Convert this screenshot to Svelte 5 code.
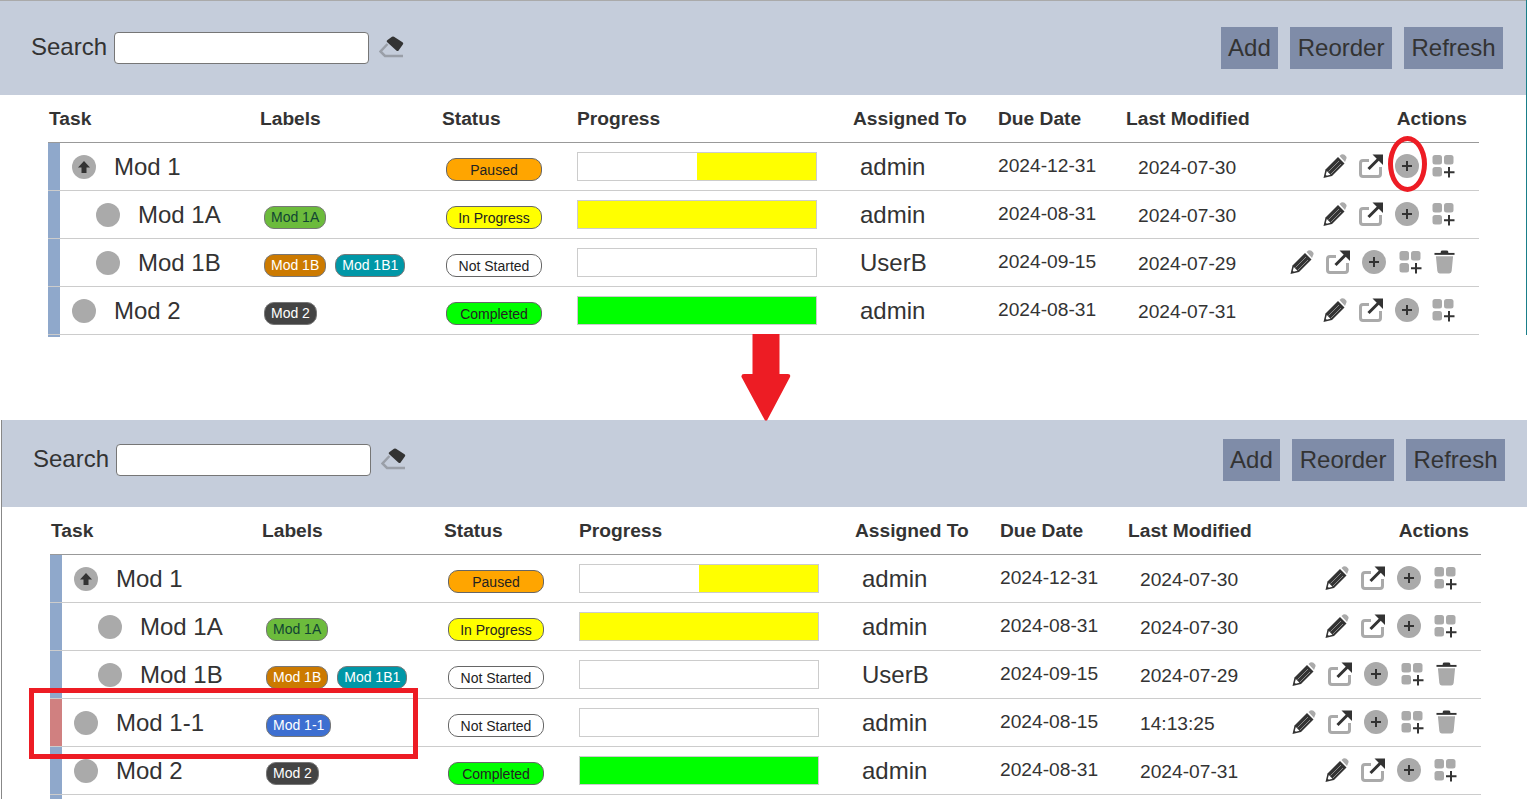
<script>
  const columns = ['Task', 'Labels', 'Status', 'Progress', 'Assigned To', 'Due Date', 'Last Modified', 'Actions'];

  const mod1 = { name: 'Mod 1', level: 0, expanded: true, labels: [], status: 'Paused', fill: 50, side: 'right', color: 'yellow', user: 'admin', due: '2024-12-31', modified: '2024-07-30' };
  const mod1a = { name: 'Mod 1A', level: 1, labels: [{ text: 'Mod 1A', kind: 'green' }], status: 'In Progress', fill: 100, color: 'yellow', user: 'admin', due: '2024-08-31', modified: '2024-07-30' };
  const mod1b = { name: 'Mod 1B', level: 1, labels: [{ text: 'Mod 1B', kind: 'amber' }, { text: 'Mod 1B1', kind: 'teal' }], status: 'Not Started', fill: 0, user: 'UserB', due: '2024-09-15', modified: '2024-07-29', canDelete: true };
  const mod11 = { name: 'Mod 1-1', level: 0, isNew: true, labels: [{ text: 'Mod 1-1', kind: 'blue' }], status: 'Not Started', fill: 0, user: 'admin', due: '2024-08-15', modified: '14:13:25', canDelete: true };
  const mod2 = { name: 'Mod 2', level: 0, labels: [{ text: 'Mod 2', kind: 'dark' }], status: 'Completed', fill: 100, color: 'lime', user: 'admin', due: '2024-08-31', modified: '2024-07-31' };

  const before = [mod1, mod1a, mod1b, mod2];
  const after = [mod1, mod1a, mod1b, mod11, mod2];

  const statusClass = {
    'Paused': 'paused',
    'In Progress': 'progress',
    'Not Started': 'idle',
    'Completed': 'done'
  };
</script>

{#snippet panel(rows, kind)}
  <section class="panel {kind}">
    <div class="toolbar">
      <label class="search">
        <span>Search</span>
        <input type="text" />
      </label>
      <svg class="eraser" width="25" height="22" viewBox="8 10 25 22" aria-hidden="true">
        <path d="M16.5 18 L9.5 25.5 L14 30 H32" fill="none" stroke="#9a9fa8" stroke-width="2.5" />
        <path d="M16 16 Q15 15 16.5 14 L21 10.8 Q22 10.2 23 10.8 L31.5 16.3 Q32.8 17.2 32 18.3 L27.6 24.5 Q26.8 25.5 25.6 24.8 Z" fill="#333" />
      </svg>
      <div class="buttons">
        <button>Add</button>
        <button>Reorder</button>
        <button>Refresh</button>
      </div>
    </div>

    <div class="table">
      <div class="row head">
        {#each columns as col}
          <div class="th">{col}</div>
        {/each}
      </div>

      {#each rows as row}
        <div class="row">
          <div class="task">
            <span class="bar" class:new={row.isNew}></span>
            <span class="dot" class:indent={row.level === 1}>
              {#if row.expanded}
                <svg width="24" height="24" viewBox="0 0 24 24" aria-hidden="true">
                  <path d="M12 6 L18 12.5 H14.5 V18 H9.5 V12.5 H6 Z" fill="#333" />
                </svg>
              {/if}
            </span>
            <span class="name">{row.name}</span>
          </div>
          <div class="labels">
            {#each row.labels as label}
              <span class="label {label.kind}">{label.text}</span>
            {/each}
          </div>
          <div class="status-cell">
            <span class="status {statusClass[row.status]}">{row.status}</span>
          </div>
          <div class="progress-cell">
            <div class="track" class:right={row.side === 'right'}>
              {#if row.fill > 0}
                <div class="fill {row.color}" style="width: {row.fill}%"></div>
              {/if}
            </div>
          </div>
          <div class="user">{row.user}</div>
          <div class="due">{row.due}</div>
          <div class="modified">{row.modified}</div>
          <div class="actions">
            <svg width="24" height="24" viewBox="0 0 24 24" aria-hidden="true">
              <path d="M0.5 24 L2.5 15.5 L15 3 L21.5 9.5 L9 22 Z" fill="#333" />
              <path d="M2.5 22 L3.8 17 L7.5 20.7 Z" fill="#fff" />
              <path d="M1.5 23 L2.4 20.5 L4 22 Z" fill="#333" />
              <path d="M5.5 17.5 L16 7 M8 20 L18 10" stroke="#8a8a8a" stroke-width="1" />
              <path d="M16.5 2 L18.2 0.6 Q20 -0.4 21.5 0.8 L23 2.3 Q24.2 3.8 23 5.5 L22 8 Z" fill="#aaa" />
            </svg>
            <svg width="24" height="24" viewBox="0 0 24 24" aria-hidden="true">
              <path d="M10 6.5 H4 Q1.5 6.5 1.5 9 V20 Q1.5 22.5 4 22.5 H19 Q21.5 22.5 21.5 20 V13" fill="none" stroke="#aaa" stroke-width="3" />
              <path d="M9.5 15 L20 4.5" stroke="#333" stroke-width="3" />
              <path d="M13.5 0.5 H24 V11 Z" fill="#333" />
            </svg>
            <svg width="24" height="24" viewBox="0 0 24 24" aria-hidden="true">
              <circle cx="12" cy="12" r="12" fill="#aaa" />
              <path d="M12 7 V17 M7 12 H17" stroke="#333" stroke-width="2" />
            </svg>
            <svg width="24" height="24" viewBox="0 0 24 24" aria-hidden="true">
              <rect x="1.5" y="1" width="9.5" height="9.5" rx="2.5" fill="#aaa" />
              <rect x="13" y="1" width="9.5" height="9.5" rx="2.5" fill="#aaa" />
              <rect x="1.5" y="13" width="9.5" height="9.5" rx="2.5" fill="#aaa" />
              <path d="M18 13 V23.5 M13 18.3 H23.5" stroke="#333" stroke-width="2" />
            </svg>
            {#if row.canDelete}
              <svg width="21" height="24" viewBox="0 0 22 24" aria-hidden="true">
                <path d="M7 1.5 Q7 0 9 0 H13 Q15 0 15 1.5 V2.5 H7 Z" fill="#333" />
                <path d="M0.5 3.5 H21.5" stroke="#333" stroke-width="2" />
                <path d="M2 6 H20 L18.5 21.5 Q18.3 24 16 24 H6 Q3.7 24 3.5 21.5 Z" fill="#aaa" />
              </svg>
            {/if}
          </div>
        </div>
      {/each}
      <span class="tail"></span>
    </div>
  </section>
{/snippet}

<div class="page">
  {@render panel(before, 'first')}
  {@render panel(after, 'second')}

  <svg class="arrow" width="50" height="87" viewBox="0 0 50 87" aria-hidden="true">
    <path d="M11.5 0 H38.5 V40 H47 Q50 40 49 43 L26 86.5 H24 L0.5 43 Q0 40 3 40 H11.5 Z" fill="#ed1c24" />
  </svg>
  <span class="ring"></span>
  <span class="highlight"></span>
</div>

<style>
  :global(body) {
    background: #fff;
  }

  .page {
    position: relative;
    width: 1527px;
    height: 799px;
    overflow: hidden;
    font-family: 'Liberation Sans', Arial, sans-serif;
    color: #333;
  }

  .panel {
    box-sizing: content-box;
    width: 1526px;
  }

  /* the teal edge only shows on the top window */
  .first {
    height: 335px;
    border-right: 1px solid #1a7f8a;
  }

  .first .toolbar {
    box-shadow: inset 0 1px 0 #aaa;
    height: 95px;
    padding-top: 1px;
  }

  .first .tail {
    height: 2px;
  }

  .second {
    margin-top: 85px;
    margin-left: 1px;
    border-left: 1px solid #888;
    height: 379px;
    overflow: hidden;
  }

  .second .toolbar {
    height: 87px;
    padding-bottom: 7px;
  }

  .toolbar {
    box-sizing: border-box;
    display: flex;
    align-items: center;
    background: #c5cddb;
    padding-left: 31px;
    padding-right: 23px;
  }

  .search {
    display: flex;
    align-items: center;
    gap: 7px;
    font-size: 24px;
  }

  .search span {
    margin-top: -2px;
  }

  .search input {
    box-sizing: border-box;
    width: 255px;
    height: 32px;
    border: 1px solid #767676;
    border-radius: 4px;
    background: #fff;
    padding: 0 4px;
    font-size: 16px;
  }

  .eraser {
    margin-left: 10px;
    margin-top: -3px;
  }

  .buttons {
    display: flex;
    gap: 12px;
    margin-left: auto;
  }

  .buttons button {
    height: 42px;
    padding: 0 7.5px;
    border: none;
    background: #7f8ca8;
    color: #333;
    font-family: inherit;
    font-size: 24px;
  }

  .table {
    margin-left: 48px;
    width: 1431px;
  }

  .row {
    box-sizing: border-box;
    display: grid;
    grid-template-columns: 212px 182px 135px 276px 145px 128px 164px 189px;
    align-items: center;
    height: 48px;
    border-bottom: 1px solid #ccc;
  }

  .row.head {
    border-bottom-color: #999;
    font-size: 19.2px;
    font-weight: bold;
  }

  .th:first-child {
    padding-left: 1px;
  }

  .th:last-child {
    text-align: right;
    padding-right: 12px;
  }

  .task {
    display: flex;
    align-items: center;
    align-self: stretch;
    font-size: 24px;
  }

  .bar {
    align-self: stretch;
    width: 12px;
    background: #8fa8cb;
  }

  .bar.new {
    background: #d08080;
  }

  .tail {
    display: block;
    width: 12px;
    height: 5px;
    background: #8fa8cb;
  }

  .dot {
    flex: none;
    width: 24px;
    height: 24px;
    margin-left: 12px;
    border-radius: 50%;
    background: #aaa;
  }

  .dot.indent {
    margin-left: 36px;
  }

  .dot svg {
    display: block;
  }

  .name {
    margin-left: 18px;
  }

  .labels {
    display: flex;
    gap: 9px;
    padding-left: 4px;
    padding-top: 6px;
  }

  .label {
    box-sizing: border-box;
    height: 23px;
    padding: 0 6px;
    border: 1px solid #777;
    border-radius: 10px;
    font-size: 14px;
    line-height: 21px;
    color: #fff;
  }

  .label.green {
    background: #6cbb3c;
    color: #143;
  }

  .label.amber {
    background: #cc7a00;
  }

  .label.teal {
    background: #0097a7;
  }

  .label.blue {
    background: #3d6fd1;
  }

  .label.dark {
    background: #444;
  }

  .status-cell {
    padding-left: 4px;
    padding-top: 5px;
  }

  .status {
    box-sizing: border-box;
    display: block;
    width: 96px;
    height: 23px;
    border: 1px solid #666;
    border-radius: 10px;
    font-size: 14px;
    line-height: 22px;
    text-align: center;
    color: #222;
  }

  .status.paused {
    background: #ffa500;
  }

  .status.progress {
    background: #ff0;
  }

  .status.idle {
    background: #fff;
  }

  .status.done {
    background: #0f0;
  }

  .track {
    box-sizing: border-box;
    display: flex;
    width: 240px;
    height: 29px;
    border: 1px solid #ccc;
    background: #fff;
  }

  .track.right {
    justify-content: flex-end;
  }

  .fill.yellow {
    background: #ff0;
  }

  .fill.lime {
    background: #0f0;
  }

  .user {
    padding-left: 7px;
    font-size: 24px;
  }

  .due {
    font-size: 19.2px;
    padding-bottom: 1px;
  }

  .modified {
    padding-left: 12px;
    padding-top: 3px;
    font-size: 19.2px;
  }

  .actions {
    display: flex;
    justify-content: flex-end;
    gap: 12px;
    padding-right: 24px;
    padding-bottom: 1px;
  }

  .actions svg {
    display: block;
    flex: none;
  }

  .arrow {
    position: absolute;
    left: 741px;
    top: 334px;
  }

  .ring {
    position: absolute;
    left: 1388px;
    top: 136px;
    box-sizing: border-box;
    width: 39px;
    height: 56px;
    border: 5px solid #ed1c24;
    border-radius: 50%;
  }

  .highlight {
    position: absolute;
    left: 29px;
    top: 688px;
    box-sizing: border-box;
    width: 389px;
    height: 71px;
    border: 5px solid #ed1c24;
  }
</style>
